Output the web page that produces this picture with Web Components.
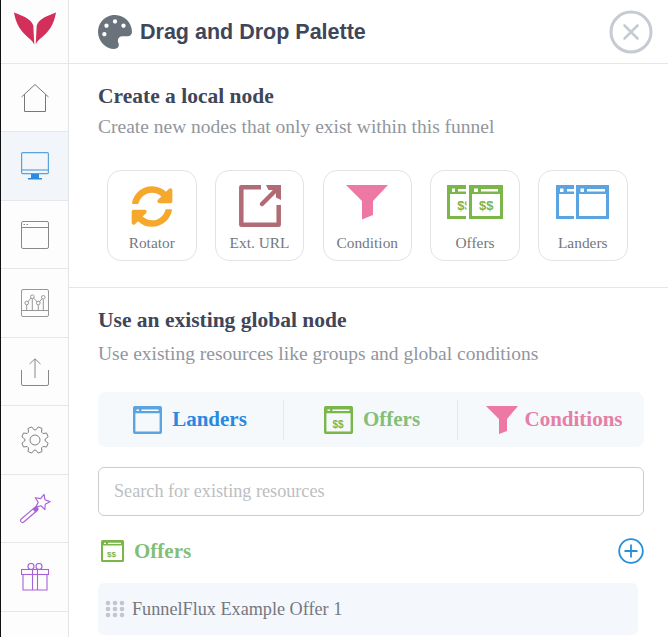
<!DOCTYPE html>
<html>
<head>
<meta charset="utf-8">
<title>Drag and Drop Palette</title>
<style>
html, body { margin: 0; height: 100%; overflow: hidden; background: #fff; }
body { font-family: "Liberation Serif", serif; }
</style>
</head>
<body>
<ff-app>
  <ff-sidebar slot="side">
    <svg slot="logo" width="42" height="33" viewBox="0 0 42 33"><path fill="#d2305a" d="M0 .5C7 3.500 17 6 19.300 13.500L20.300 32.500C17 25 3.500 22 0 .5zM42 .5C35 3.500 25 6 22.700 13.500L21.700 32.500C25 25 38.500 22 42 .5z"/></svg>
    <ff-nav-item>
      <svg width="28" height="28" viewBox="0 0 28 28" fill="none" stroke="#777" stroke-width="1"><path d="M.5 13 14 .5 27.500 13M3.500 10.500V27.500h21V10.500"/></svg>
    </ff-nav-item>
    <ff-nav-item active>
      <svg width="28" height="28" viewBox="0 0 28 28" fill="none" stroke="#58a3dd" stroke-width="1.200"><rect x=".6" y=".6" width="26.800" height="21" rx="1"/><path d="M.6 18h26.800"/><path fill="#2b8be0" stroke="none" d="M10 22h8v4h-8zM7 26h14v1.500H7z"/></svg>
    </ff-nav-item>
    <ff-nav-item>
      <svg width="28" height="28" viewBox="0 0 28 28" fill="none" stroke="#888" stroke-width="1"><rect x=".5" y=".5" width="27" height="27" rx="1.500"/><path d="M.5 6.500h27"/><path stroke-width="1.200" d="M2.500 3.500h1.500M5.500 3.500H7"/></svg>
    </ff-nav-item>
    <ff-nav-item>
      <svg width="28" height="28" viewBox="0 0 28 28" fill="none" stroke="#8c8c8c" stroke-width=".9"><rect x=".5" y=".5" width="27" height="27" rx="1.500"/><path d="M.5 21.500h27M5.700 16v5M11.300 10v11M17.300 16v5M22.300 10.500v10.500"/><path d="M5.700 14 11.300 7.700 17.300 14 22.300 8.300"/><g fill="#fff"><circle cx="5.700" cy="14" r="1.800"/><circle cx="11.300" cy="7.700" r="1.800"/><circle cx="17.300" cy="14" r="1.800"/><circle cx="22.300" cy="8.300" r="1.800"/></g></svg>
    </ff-nav-item>
    <ff-nav-item>
      <svg width="28" height="28" viewBox="0 0 28 28" fill="none" stroke="#888" stroke-width="1"><path d="M.5 12v14a1.500 1.500 0 0 0 1.500 1.500h24a1.500 1.500 0 0 0 1.500-1.500V12M14 20V1M8.500 6 14 .8 19.500 6"/></svg>
    </ff-nav-item>
    <ff-nav-item>
      <svg id="gear" width="28" height="28" viewBox="0 0 28 28" fill="none" stroke="#808080" stroke-width="1"><path/><circle cx="14" cy="14" r="5"/></svg>
    </ff-nav-item>
    <ff-nav-item>
      <svg width="32" height="30" viewBox="0 0 32 30" fill="none"><path stroke="#a862d8" stroke-width="5" stroke-linecap="round" d="M3.500 26.500 17 15"/><path stroke="#fff" stroke-width="2.800" stroke-linecap="round" d="M3.500 26.500 14 17.500"/><path stroke="#a862d8" stroke-width="1.200" stroke-linejoin="round" fill="#fff" d="M25.070-.23 25.950 5.110 30.990 7.080 26.190 9.570 25.870 14.970 22.020 11.170 16.780 12.530 19.210 7.700 16.290 3.140 21.640 3.950z" transform="translate(0 .6)"/></svg>
    </ff-nav-item>
    <ff-nav-item>
      <svg width="28" height="28" viewBox="0 0 28 28" fill="none" stroke="#a862d8" stroke-width="1.100"><circle cx="10" cy="3.500" r="3"/><circle cx="18" cy="3.500" r="3"/><rect x=".5" y="6.500" width="27" height="5"/><path d="M2 11.500v15.500h24V11.500M11.500 6.500V27M16.500 6.500V27"/></svg>
    </ff-nav-item>
  </ff-sidebar>

  <ff-header label="Drag and Drop Palette" slot="main">
    <svg slot="icon" width="34" height="34" viewBox="0 0 512 512"><path fill="#6a727c" d="M204.300 5C104.900 24.400 24.800 104.300 5.200 203.400c-37 187 131.700 326.400 258.800 306.700 41.200-6.400 61.400-54.600 42.500-91.700-23.100-45.400 9.900-98.400 60.900-98.400h79.700c35.800 0 64.800-29.600 64.900-65.300C511.500 97.100 368.100-26.900 204.300 5zM96 320c-17.700 0-32-14.300-32-32s14.300-32 32-32 32 14.300 32 32-14.300 32-32 32zm32-128c-17.700 0-32-14.300-32-32s14.300-32 32-32 32 14.300 32 32-14.300 32-32 32zm128-64c-17.700 0-32-14.300-32-32s14.300-32 32-32 32 14.300 32 32-14.300 32-32 32zm128 64c-17.700 0-32-14.300-32-32s14.300-32 32-32 32 14.300 32 32-14.300 32-32 32z"/></svg>
    <svg slot="close" width="44" height="44" viewBox="0 0 44 44" fill="none" stroke="#c6cad3" stroke-width="3"><circle cx="22" cy="22" r="20"/><path stroke-linecap="round" stroke-width="2.600" d="M15.500 15.500l13 13M28.500 15.500l-13 13"/></svg>
  </ff-header>

  <ff-section slot="main" heading="Create a local node" sub="Create new nodes that only exist within this funnel">
    <ff-node-grid>
      <ff-node-card label="Rotator">
        <svg width="42" height="43" viewBox="0 0 512 512"><path fill="#f5a82c" d="M370.720 133.280C339.458 104.008 298.888 87.962 255.848 88c-77.458.068-144.328 53.178-162.791 126.850-1.344 5.363-6.122 9.150-11.651 9.150H24.103c-7.498 0-13.194-6.807-11.807-14.176C33.933 94.924 134.813 8 256 8c66.448 0 126.791 26.136 171.315 68.685L463.030 40.970C478.149 25.851 504 36.559 504 57.941V192c0 13.255-10.745 24-24 24H345.941c-21.382 0-32.090-25.851-16.971-40.971l41.750-41.749zM32 296h134.059c21.382 0 32.090 25.851 16.971 40.971l-41.750 41.750c31.262 29.273 71.835 45.319 114.876 45.280 77.418-.070 144.315-53.144 162.787-126.849 1.344-5.363 6.122-9.150 11.651-9.150h57.304c7.498 0 13.194 6.807 11.807 14.176C478.067 417.076 377.187 504 256 504c-66.448 0-126.791-26.136-171.315-68.685L48.970 471.030C33.851 486.149 8 475.441 8 454.059V320c0-13.255 10.745-24 24-24z"/></svg>
      </ff-node-card>
      <ff-node-card label="Ext. URL">
        <svg width="42" height="42" viewBox="0 0 42 42" fill="none" stroke="#b06b75" stroke-width="4.500"><path stroke-linejoin="round" d="M22 2.300H2.300v37.400h37.400V20"/><path stroke-linecap="round" d="M23 19 36 6"/><path fill="#b06b75" stroke="none" d="M27 0h15v15l-5-2.500V5h-7.500z"/></svg>
      </ff-node-card>
      <ff-node-card label="Condition">
        <svg width="42" height="35" viewBox="0 0 42 35"><path fill="#ee78a4" d="M0 0h42L27 16v14l-11 4.500V16z"/></svg>
      </ff-node-card>
      <ff-node-card label="Offers">
        <svg width="56" height="34" viewBox="0 0 56 34" fill="none" stroke="#7ab648" stroke-width="3"><defs><clipPath id="half"><rect x="0" y="0" width="19.500" height="34"/></clipPath></defs><path d="M19 1.500H1.500v31H19"/><rect x="23.500" y="1.500" width="31" height="31"/><path stroke-width="7" d="M0 5.500h19M22 5.500h33"/><path fill="#fff" stroke="none" d="M5 3.500h3v3.500H5zM11 4h8v2.500h-8zM27 3.500h4v3.500h-4zM34 4h17v2.500H34z"/><text x="10.300" y="25" clip-path="url(#half)" font-family="Liberation Sans" font-size="13" font-weight="700" fill="#7ab648" stroke="none">$$</text><text x="32" y="25" font-family="Liberation Sans" font-size="13" font-weight="700" fill="#7ab648" stroke="none">$$</text></svg>
      </ff-node-card>
      <ff-node-card label="Landers">
        <svg width="53" height="34" viewBox="0 0 53 34" fill="none" stroke="#5ba4e2" stroke-width="3"><path d="M18 1.500H1.500v31H18"/><rect x="21.500" y="1.500" width="30" height="31"/><path stroke-width="7" d="M0 5.500h18M20 5.500h33"/><path fill="#fff" stroke="none" d="M4 3.500h3.500v3.500H4zM11 4h7v2.500h-7zM24.500 3.500H28v3.500h-3.500zM31 4h18v2.500H31z"/></svg>
      </ff-node-card>
    </ff-node-grid>
  </ff-section>

  <ff-section slot="main" heading="Use an existing global node" sub="Use existing resources like groups and global conditions" last>
    <ff-tabs>
      <ff-tab label="Landers" color="#2b88e0" style="--w:186px;--pad:0 1px 0 0">
        <svg width="29" height="28" viewBox="0 0 29 28" fill="none" stroke="#5ba4e2" stroke-width="2.400"><rect x="1.200" y="1.200" width="26.600" height="25.600" rx=".6"/><path stroke-width="5.500" d="M1 4.500h27"/><path stroke="#fff" stroke-width="1.600" d="M3.500 4.200h2.500M8.500 4.200h17"/></svg>
      </ff-tab>
      <ff-tab label="Offers" color="#83bf78" style="--w:174px;--pad:0 0 0 3px">
        <svg width="29" height="28" viewBox="0 0 29 28" fill="none" stroke="#7ab648" stroke-width="2.400"><rect x="1.200" y="1.200" width="26.600" height="25.600" rx=".6"/><path stroke-width="5.500" d="M1 4.500h27"/><path stroke="#fff" stroke-width="1.600" d="M3.500 4.200h2.500M8.500 4.200h17"/><text x="8.500" y="21.500" font-family="Liberation Sans" font-size="10" font-weight="700" fill="#7ab648" stroke="none">$$</text></svg>
      </ff-tab>
      <ff-tab label="Conditions" color="#e57fa5" tight style="--w:186px;--pad:0 0 0 7px">
        <svg width="32" height="28" viewBox="0 0 32 28"><path fill="#ee78a4" d="M0 0h32L21 13v12l-8 3V13z"/></svg>
      </ff-tab>
    </ff-tabs>
    <ff-search placeholder="Search for existing resources"></ff-search>
    <ff-group-head label="Offers">
      <svg slot="icon" width="23" height="22" viewBox="0 0 23 22" fill="none" stroke="#7ab648" stroke-width="2"><rect x="1" y="1" width="21" height="20" rx=".5"/><path stroke-width="4" d="M1 3.500h21"/><path stroke="#fff" stroke-width="1.200" d="M3 3.300h2M7 3.300h13"/><text x="6" y="17" font-family="Liberation Sans" font-size="8" font-weight="700" fill="#7ab648" stroke="none">$$</text></svg>
      <svg slot="action" width="26" height="26" viewBox="0 0 26 26" fill="none" stroke="#2590d8" stroke-width="1.800"><circle cx="13" cy="13" r="11.800"/><path d="M13 6.500v13M6.500 13h13"/></svg>
    </ff-group-head>
    <ff-list-item label="FunnelFlux Example Offer 1"></ff-list-item>
  </ff-section>
</ff-app>

<script>
// builds a shadow root from a css + html string
const shadow = (el, css, html) => {
  const template = document.createElement("template");
  template.innerHTML = `<style>${css}</style>${html}`;
  el.attachShadow({ mode: "open" }).appendChild(template.content.cloneNode(true));
};

class FfApp extends HTMLElement {
  constructor() {
    super();
    shadow(this, `
:host { display: flex; height: 637px; overflow: hidden; }
main { flex: 1; min-width: 0; display: flex; flex-direction: column; }
`, `<slot name="side"></slot><main><slot name="main"></slot></main>`);
  }
}

class FfSidebar extends HTMLElement {
  constructor() {
    super();
    shadow(this, `
:host {
  display: flex;
  flex-direction: column;
  flex: none;
  width: 67px;
  height: 637px;
  border-left: 1px solid #111;
  border-right: 1px solid #e4e5e8;
  background: #fdfdfd;
}
.logo { height: 62.900px; padding: 0 0 6px 1px; box-sizing: border-box; display: flex; align-items: center; justify-content: center; flex: none; }
.rule { flex: none; height: 1px; background: #e6e7ea; }
`, `<div class="logo"><slot name="logo"></slot></div><div class="rule"></div><slot></slot>`);
  }
}

class FfNavItem extends HTMLElement {
  constructor() {
    super();
    shadow(this, `
:host {
  display: flex;
  flex: none;
  height: 67.500px;
  align-items: center;
  justify-content: center;
  border-bottom: 1px solid #e6e7ea;
  padding-left: 1px;
}
:host([active]) { background: #f2f6fa; }
::slotted(svg) { display: block; }
`, `<slot></slot>`);
  }
}

class FfHeader extends HTMLElement {
  constructor() {
    super();
    shadow(this, `
:host {
  display: flex;
  flex: none;
  align-items: center;
  height: 63px;
  padding: 0 15px 0 29px;
  border-bottom: 1px solid #e6e7ea;
}
h1 {
  margin: 0 0 0 8px;
  flex: 1;
  font: 700 21.500px/30px "Liberation Sans", sans-serif;
  color: #3f4659;
}
::slotted(svg) { display: block; flex: none; }
`, `<slot name="icon"></slot><h1>${this.getAttribute("label")}</h1><slot name="close"></slot>`);
  }
}

class FfSection extends HTMLElement {
  constructor() {
    super();
    shadow(this, `
:host {
  display: block;
  flex: none;
  padding: 20px 24px 26px 29px;
  border-bottom: 1px solid #e6e7ea;
}
:host([last]) { border-bottom: 0; }
h2 { margin: 0; font: 700 21.500px/24px "Liberation Serif", serif; color: #3f4659; }
p { margin: 6px 0 0; font: 400 19.500px/26px "Liberation Serif", serif; color: #92969d; }
:host([last]) p { margin-top: 9px; }
`, `<h2>${this.getAttribute("heading")}</h2><p>${this.getAttribute("sub")}</p><slot></slot>`);
  }
}

class FfNodeGrid extends HTMLElement {
  constructor() {
    super();
    shadow(this, `
:host { display: flex; gap: 18.250px; margin: 30px 0 0 9px; }
`, `<slot></slot>`);
  }
}

class FfNodeCard extends HTMLElement {
  constructor() {
    super();
    shadow(this, `
:host {
  display: block;
  box-sizing: border-box;
  width: 89.500px;
  height: 91px;
  border: 1px solid #e2e3e7;
  border-radius: 14px;
  background: #fff;
  text-align: center;
}
.icon { height: 57px; padding-top: 14px; box-sizing: border-box; display: flex; justify-content: center; }
::slotted(svg) { display: block; }
span { font: 400 15.400px/20px "Liberation Serif", serif; color: #74777e; display: block; margin-top: 5px; }
`, `<div class="icon"><slot></slot></div><span>${this.getAttribute("label")}</span>`);
  }
}

class FfTabs extends HTMLElement {
  constructor() {
    super();
    shadow(this, `
:host {
  display: flex;
  align-items: center;
  height: 55px;
  margin-top: 25px;
  background: #f5f9fc;
  border-radius: 8px;
}
`, `<slot></slot>`);
  }
}

class FfTab extends HTMLElement {
  constructor() {
    super();
    shadow(this, `
:host {
  display: flex;
  align-items: center;
  justify-content: center;
  box-sizing: border-box;
  width: var(--w);
  height: 40px;
  padding: var(--pad);
  gap: ${this.hasAttribute("tight") ? 6 : 10}px;
  border-right: 1px solid #e4e9ed;
  font: 700 21px/28px "Liberation Serif", serif;
  color: ${this.getAttribute("color")};
}
:host(:last-child) { border-right: 0; }
span { margin-top: -2px; }
::slotted(svg) { display: block; flex: none; }
`, `<slot></slot><span>${this.getAttribute("label")}</span>`);
  }
}

class FfSearch extends HTMLElement {
  constructor() {
    super();
    shadow(this, `
:host { display: block; margin-top: 20px; }
input {
  display: block;
  box-sizing: border-box;
  width: 100%;
  height: 49px;
  padding: 0 15px;
  border: 1px solid #cbcdd0;
  border-radius: 6px;
  outline: 0;
  font: 400 18.200px "Liberation Serif", serif;
  background: #fff;
}
input::placeholder { color: #bcbec2; opacity: 1; }
`, `<input placeholder="${this.getAttribute("placeholder")}">`);
  }
}

class FfGroupHead extends HTMLElement {
  constructor() {
    super();
    shadow(this, `
:host {
  display: flex;
  align-items: center;
  height: 26px;
  margin-top: 22px;
  padding-left: 3px;
  gap: 10px;
  font: 700 21px/26px "Liberation Serif", serif;
  color: #83bf78;
}
span { flex: 1; }
::slotted(svg) { display: block; flex: none; }
`, `<slot name="icon"></slot><span>${this.getAttribute("label")}</span><slot name="action"></slot>`);
  }
}

class FfListItem extends HTMLElement {
  constructor() {
    super();
    const dots = [3, 9, 15].flatMap((y) => [3, 10, 17].map((x) => `<circle cx="${x}" cy="${y}" r="2.300"/>`)).join("");
    shadow(this, `
:host {
  display: flex;
  align-items: center;
  gap: 7px;
  height: 52px;
  width: 540px;
  margin-top: 19px;
  padding-left: 7px;
  box-sizing: border-box;
  border-radius: 6px;
  background: #f4f7fc;
  font: 400 18.200px/24px "Liberation Serif", serif;
  color: #75787f;
}
svg { display: block; flex: none; }
`, `<svg width="20" height="18" fill="#c3c6cf">${dots}</svg><span>${this.getAttribute("label")}</span>`);
  }
}

customElements.define("ff-app", FfApp);
customElements.define("ff-sidebar", FfSidebar);
customElements.define("ff-nav-item", FfNavItem);
customElements.define("ff-header", FfHeader);
customElements.define("ff-section", FfSection);
customElements.define("ff-node-grid", FfNodeGrid);
customElements.define("ff-node-card", FfNodeCard);
customElements.define("ff-tabs", FfTabs);
customElements.define("ff-tab", FfTab);
customElements.define("ff-search", FfSearch);
customElements.define("ff-group-head", FfGroupHead);
customElements.define("ff-list-item", FfListItem);

// eight tooth gear outline
const gearPoints = [];
for (let i = 0; i < 8; i++) {
  const a = (i * Math.PI) / 4 - Math.PI / 8;
  [[10.2, -0.2], [13.5, -0.1], [13.5, 0.1], [10.2, 0.2]].forEach(([r, d]) => {
    gearPoints.push(`${(14 + r * Math.cos(a + d * 1.5)).toFixed(2)} ${(14 + r * Math.sin(a + d * 1.5)).toFixed(2)}`);
  });
}
document.querySelector("#gear path").setAttribute("d", `M${gearPoints.join("L")}Z`);
document.querySelector("#gear path").setAttribute("stroke-linejoin", "round");
</script>
</body>
</html>
